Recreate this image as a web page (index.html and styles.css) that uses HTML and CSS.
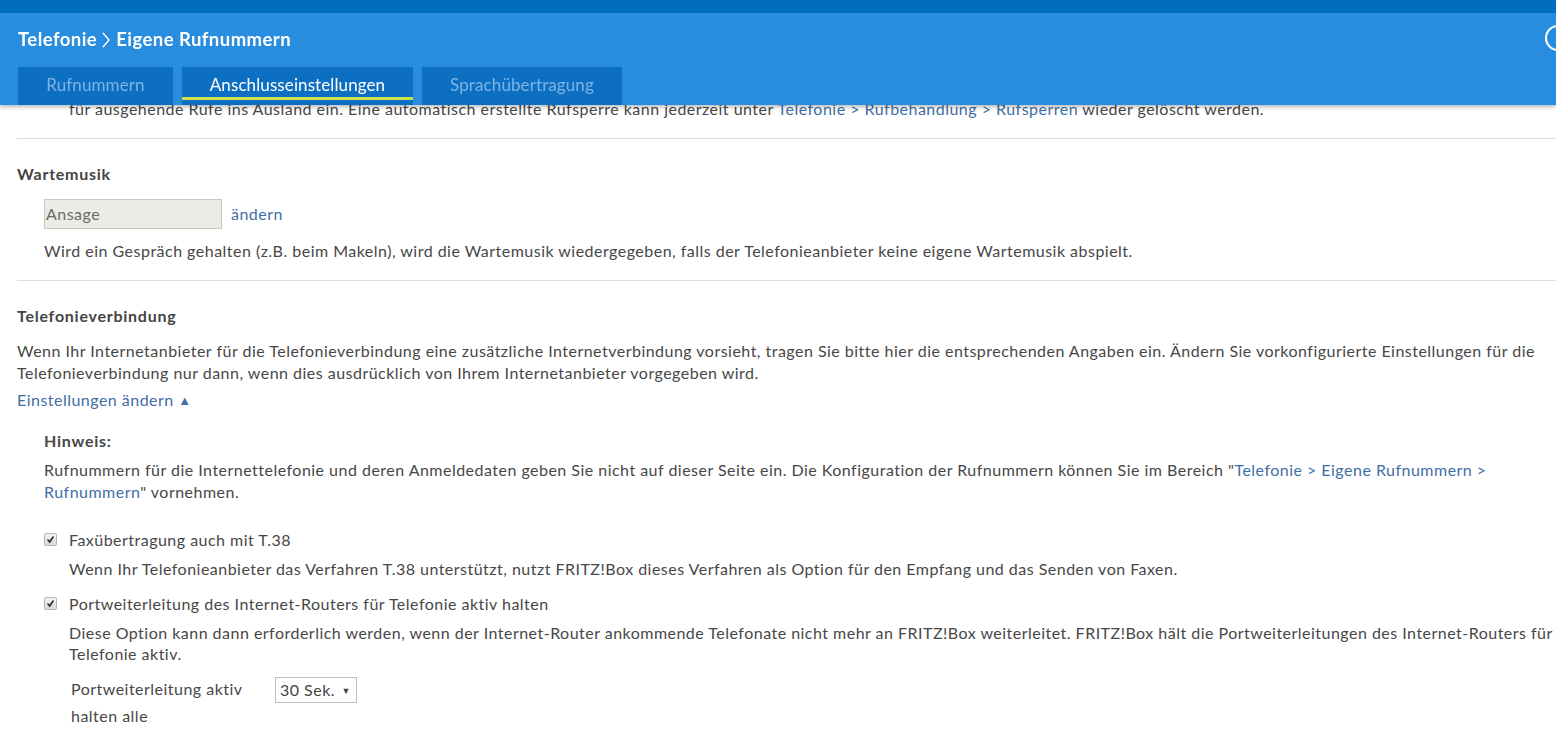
FILE: index.html
```html
<!DOCTYPE html>
<html lang="de">
<head>
<meta charset="utf-8">
<title>Telefonie - Eigene Rufnummern</title>
<link rel="stylesheet" href="styles.css">
</head>
<body>
<header class="masthead">
  <div class="accent"></div>
  <div class="head">
    <h1 class="title">Telefonie<svg class="chev" width="14" height="18" viewBox="0 0 14 18"><path d="M4 2 L10 9 L4 16" fill="none" stroke="#fff" stroke-width="1.4"/></svg>Eigene Rufnummern</h1>
    <nav class="tabs">
      <a class="tab">Rufnummern</a>
      <a class="tab active">Anschlusseinstellungen</a>
      <a class="tab">Sprachübertragung</a>
    </nav>
  </div>
  <svg class="help" width="30" height="30" viewBox="0 0 30 30"><circle cx="15" cy="15" r="12" fill="none" stroke="#fff" stroke-width="2"/></svg>
</header>

<main class="content">
  <p class="cut">für ausgehende Rufe ins Ausland ein. Eine automatisch erstellte Rufsperre kann jederzeit unter <a class="link">Telefonie &gt; Rufbehandlung &gt; Rufsperren</a> wieder gelöscht werden.</p>

  <section class="block">
    <h2 class="heading">Wartemusik</h2>
    <div class="indent">
      <div class="field-row">
        <span class="readonly">Ansage</span>
        <a class="link">ändern</a>
      </div>
      <p class="desc">Wird ein Gespräch gehalten (z.B. beim Makeln), wird die Wartemusik wiedergegeben, falls der Telefonieanbieter keine eigene Wartemusik abspielt.</p>
    </div>
  </section>

  <section class="block">
    <h2 class="heading">Telefonieverbindung</h2>
    <p class="intro">Wenn Ihr Internetanbieter für die Telefonieverbindung eine zusätzliche Internetverbindung vorsieht, tragen Sie bitte hier die entsprechenden Angaben ein. Ändern Sie vorkonfigurierte Einstellungen für die Telefonieverbindung nur dann, wenn dies ausdrücklich von Ihrem Internetanbieter vorgegeben wird.</p>
    <a class="link toggle">Einstellungen ändern <span class="tri">▲</span></a>

    <div class="indent">
      <h3 class="note-title">Hinweis:</h3>
      <p class="note">Rufnummern für die Internettelefonie und deren Anmeldedaten geben Sie nicht auf dieser Seite ein. Die Konfiguration der Rufnummern können Sie im Bereich "<a class="link">Telefonie &gt; Eigene Rufnummern &gt; Rufnummern</a>" vornehmen.</p>

      <div class="option first">
        <label class="check-row">
          <span class="check"><svg width="13" height="13" viewBox="0 0 13 13"><path d="M3 6.5 L5.5 9.5 L10 3" fill="none" stroke="#333" stroke-width="2"/></svg></span>
          Faxübertragung auch mit T.38
        </label>
        <p class="opt-desc">Wenn Ihr Telefonieanbieter das Verfahren T.38 unterstützt, nutzt FRITZ!Box dieses Verfahren als Option für den Empfang und das Senden von Faxen.</p>
      </div>

      <div class="option">
        <label class="check-row">
          <span class="check"><svg width="13" height="13" viewBox="0 0 13 13"><path d="M3 6.5 L5.5 9.5 L10 3" fill="none" stroke="#333" stroke-width="2"/></svg></span>
          Portweiterleitung des Internet-Routers für Telefonie aktiv halten
        </label>
        <p class="opt-desc">Diese Option kann dann erforderlich werden, wenn der Internet-Router ankommende Telefonate nicht mehr an FRITZ!Box weiterleitet. FRITZ!Box hält die Portweiterleitungen des Internet-Routers für Telefonie aktiv.</p>
        <div class="interval">
          <span class="interval-label">Portweiterleitung aktiv halten alle</span>
          <span class="select">30 Sek. <span class="caret">▼</span></span>
        </div>
      </div>
    </div>
  </section>
</main>
</body>
</html>
```

FILE: styles.css
```css
* { box-sizing: border-box; }

html, body {
  margin: 0;
  padding: 0;
  height: 100%;
  overflow: hidden;
  background: #fff;
}

body {
  font-family: "Lato", "Open Sans", sans-serif;
  font-size: 16px;
  line-height: 21.5px;
  letter-spacing: 0.48px;
  color: #474747;
}

a { text-decoration: none; cursor: pointer; }
.link { color: #3f6ea6; }

p, h1, h2, h3 { margin: 0; }

/* Header overlaying the scrolled content */
.masthead {
  position: fixed;
  top: 0;
  left: 0;
  right: 0;
  height: 105px;
  background: #288cdf;
  box-shadow: 0 2px 4px rgba(0, 0, 0, 0.28);
  z-index: 10;
}

.accent {
  height: 13px;
  background: #006dbe;
}

.head {
  padding: 0 0 0 18px;
  display: flex;
  flex-direction: column;
}

.title {
  display: flex;
  align-items: center;
  height: 54px;
  padding-bottom: 1px;
  color: #fff;
  font-size: 18.5px;
  font-weight: 700;
  letter-spacing: 0.45px;
}

.chev { margin: 0 3px 0 2px; }

.tabs {
  display: flex;
  gap: 9px;
  height: 38px;
}

.tab {
  display: flex;
  align-items: center;
  justify-content: center;
  background: #0c6fc2;
  color: #7eb4e6;
  font-size: 17px;
  letter-spacing: 0.1px;
  padding-bottom: 2px;
}

.tab:nth-child(1) { width: 155px; }
.tab:nth-child(2) { width: 231px; }
.tab:nth-child(3) { width: 200px; }

.tab.active {
  color: #fff;
  box-shadow: inset 0 -5px 0 #0c6fc2, inset 0 -8px 0 #cfe14a;
}

.help {
  position: absolute;
  right: -17px;
  top: 23px;
}

/* Content */
.content {
  padding: 98px 0 0 17px;
}

.cut {
  padding-left: 52px;
  white-space: nowrap;
}

.block {
  border-top: 1px solid #dcdcdc;
}

.block:first-of-type { margin-top: 18px; }

.heading {
  font-size: 16px;
  font-weight: 700;
  color: #444;
  margin-top: 24px;
  line-height: 21.5px;
  letter-spacing: 0.75px;
}

.indent { padding-left: 27px; }

.field-row {
  display: flex;
  align-items: center;
  gap: 9px;
  margin-top: 15px;
}

.readonly {
  width: 178px;
  height: 30px;
  line-height: 28px;
  background: #ececE7;
  border: 1px solid #c9c9c4;
  padding-left: 1px;
  color: #6a6a6a;
}

.desc {
  margin-top: 11px;
  margin-bottom: 18px;
}

.intro {
  margin-top: 14px;
  padding-right: 8px;
}

.toggle {
  display: inline-block;
  margin-top: 6px;
}

.tri {
  font-size: 13px;
  position: relative;
  top: -1px;
}

.note-title {
  margin-top: 17px;
  font-size: 16px;
  font-weight: 700;
  line-height: 21.5px;
  letter-spacing: 0.75px;
}

.note {
  margin-top: 8px;
  padding-right: 40px;
}

.option { margin-top: 14px; }
.option.first { margin-top: 27px; }

.check-row {
  display: flex;
  align-items: center;
  gap: 12px;
}

.check {
  width: 13px;
  height: 13px;
  border: 1px solid #b4b4b4;
  border-radius: 2px;
  background: linear-gradient(#f4f4f4, #dcdcdc);
  display: flex;
  align-items: center;
  justify-content: center;
}

.check svg { display: block; }

.opt-desc {
  margin-top: 7px;
  padding-left: 25px;
  padding-right: 0;
}

.interval {
  display: flex;
  align-items: flex-start;
  margin-top: 10px;
  padding-left: 27px;
}

.interval-label {
  width: 204px;
  line-height: 27px;
}

.select {
  margin-top: 2px;
  width: 82px;
  height: 26px;
  border: 1px solid #bdbdbd;
  padding-left: 4px;
  line-height: 24px;
  color: #444;
}

.caret {
  font-size: 9px;
  position: relative;
  top: -2px;
  margin-left: 2px;
}
```
